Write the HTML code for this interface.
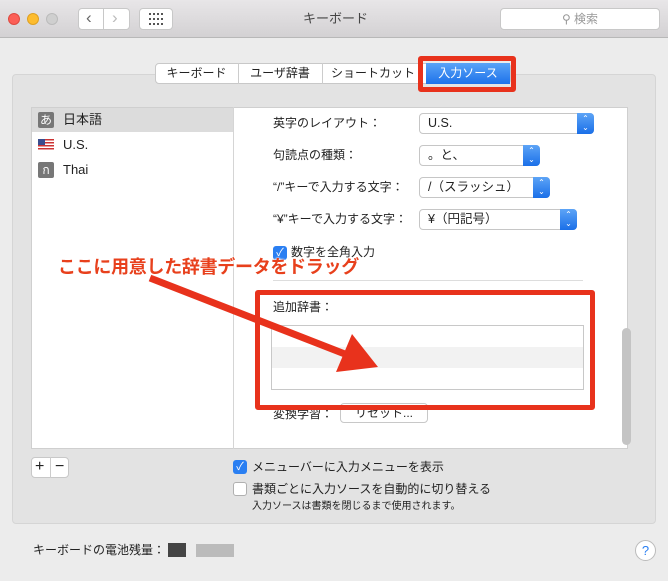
<!DOCTYPE html>
<html><head><meta charset="utf-8"><style>
*{box-sizing:border-box;margin:0;padding:0}
body{width:668px;height:581px;background:#ececec;font-family:"Liberation Sans","Noto Sans CJK JP",sans-serif;font-size:12px;line-height:1.2;color:#222;position:relative;overflow:hidden}
.a{position:absolute}
.tb{left:0;top:0;width:668px;height:38px;background:linear-gradient(#e8e6e8,#d3d1d3);border-bottom:1px solid #b8b8b8}
.dot{width:12px;height:12px;border-radius:50%;top:13px}
.btn{background:#fff;border:1px solid #c8c8c8;border-radius:4px}
.pop{height:21px;background:#fff;border:1px solid #c6c6c6;border-radius:4px;font-size:12.5px;padding:2px 0 0 8px}
.pop i{position:absolute;right:-1px;top:-1px;width:17px;height:21px;background:linear-gradient(#5da4f6,#1a6fe8);border-radius:0 4px 4px 0;color:#fff;font-style:normal;font-size:8px;text-align:center;line-height:9px;padding-top:1px}
.lbl{font-size:12px;left:273px}
.cb{width:14px;height:14px;border-radius:3px}
.on{background:#2a7ff2;color:#fff;font-size:11px;line-height:14px;text-align:center}
.off{background:#fff;border:1px solid #b0b0b0}
</style></head><body>
<div class="a tb"></div>
<div class="a dot" style="left:8px;background:#fc5f57;border:1px solid #de4a41"></div>
<div class="a dot" style="left:27px;background:#fdbc2e;border:1px solid #dea123"></div>
<div class="a dot" style="left:46px;background:#cfcfcf;border:1px solid #bbb"></div>
<div class="a btn" style="left:78px;top:8px;width:52px;height:22px"></div>
<div class="a" style="left:103px;top:8px;width:1px;height:22px;background:#c8c8c8"></div>
<div class="a" style="left:86px;top:8px;font-size:17px;color:#666">&#8249;</div>
<div class="a" style="left:112px;top:8px;font-size:17px;color:#bbb">&#8250;</div>
<div class="a btn" style="left:139px;top:8px;width:34px;height:22px"></div>
<svg class="a" style="left:149px;top:13px" width="14" height="12" fill="#555"><g><rect x="0" y="0" width="2" height="2"/><rect x="4" y="0" width="2" height="2"/><rect x="8" y="0" width="2" height="2"/><rect x="12" y="0" width="2" height="2"/><rect x="0" y="5" width="2" height="2"/><rect x="4" y="5" width="2" height="2"/><rect x="8" y="5" width="2" height="2"/><rect x="12" y="5" width="2" height="2"/><rect x="0" y="10" width="2" height="2"/><rect x="4" y="10" width="2" height="2"/><rect x="8" y="10" width="2" height="2"/><rect x="12" y="10" width="2" height="2"/></g></svg>
<div class="a" style="left:303px;top:11px;font-size:13px;color:#444">キーボード</div>
<div class="a btn" style="left:500px;top:8px;width:160px;height:22px;color:#999;font-size:12px;text-align:center;line-height:20px">&#9906; 検索</div>

<div class="a" style="left:12px;top:74px;width:644px;height:450px;background:#e3e3e3;border:1px solid #d5d5d5;border-radius:4px"></div>
<div class="a btn" style="left:155px;top:63px;width:356px;height:21px;border-radius:4px"></div>
<div class="a" style="left:155px;top:66px;width:83px;text-align:center;font-size:12px">キーボード</div>
<div class="a" style="left:238px;top:63px;width:1px;height:21px;background:#ccc"></div>
<div class="a" style="left:238px;top:66px;width:84px;text-align:center;font-size:12px">ユーザ辞書</div>
<div class="a" style="left:322px;top:63px;width:1px;height:21px;background:#ccc"></div>
<div class="a" style="left:322px;top:66px;width:102px;text-align:center;font-size:12px">ショートカット</div>
<div class="a" style="left:426px;top:63px;width:84px;height:21px;background:linear-gradient(#5aa3f7,#1d72ea);color:#fff;text-align:center;font-size:12px;line-height:21px">入力ソース</div>
<div class="a" style="left:418px;top:56px;width:98px;height:36px;border:5px solid #e8321c;border-radius:3px"></div>

<div class="a" style="left:31px;top:107px;width:597px;height:342px;background:#fff;border:1px solid #cfcfcf"></div>
<div class="a" style="left:233px;top:107px;width:1px;height:342px;background:#d5d5d5"></div>
<div class="a" style="left:32px;top:108px;width:201px;height:24px;background:#dcdcdc"></div>
<div class="a" style="left:38px;top:112px;width:16px;height:16px;background:#777;color:#fff;border-radius:2px;font-size:12px;text-align:center;line-height:16px">あ</div>
<div class="a" style="left:63px;top:112px;font-size:13px">日本語</div>
<div class="a" style="left:38px;top:139px;width:16px;height:11px;background:repeating-linear-gradient(#c33 0 1.5px,#fff 1.5px 3px)"><div style="width:7px;height:6px;background:#3a4d8f"></div></div>
<div class="a" style="left:63px;top:137px;font-size:13px">U.S.</div>
<div class="a" style="left:38px;top:162px;width:16px;height:16px;background:#777;color:#fff;border-radius:2px;font-size:12px;text-align:center;line-height:16px">ก</div>
<div class="a" style="left:63px;top:162px;font-size:13px">Thai</div>

<div class="a lbl" style="top:116px">英字のレイアウト：</div>
<div class="a pop" style="left:419px;top:113px;width:175px">U.S.<i>&#8963;<br>&#8964;</i></div>
<div class="a lbl" style="top:148px">句読点の種類：</div>
<div class="a pop" style="left:419px;top:145px;width:121px">。と、<i>&#8963;<br>&#8964;</i></div>
<div class="a lbl" style="top:180px">“/”キーで入力する文字：</div>
<div class="a pop" style="left:419px;top:177px;width:131px">/（スラッシュ）<i>&#8963;<br>&#8964;</i></div>
<div class="a lbl" style="top:212px">“¥”キーで入力する文字：</div>
<div class="a pop" style="left:419px;top:209px;width:158px">¥（円記号）<i>&#8963;<br>&#8964;</i></div>
<div class="a cb on" style="left:273px;top:246px">✓</div>
<div class="a" style="left:291px;top:245px;font-size:12px">数字を全角入力</div>
<div class="a" style="left:273px;top:280px;width:310px;height:1px;background:#ddd"></div>
<div class="a" style="left:273px;top:300px;font-size:12px">追加辞書：</div>
<div class="a" style="left:271px;top:325px;width:313px;height:65px;border:1px solid #c8c8c8;background:#fff"></div>
<div class="a" style="left:272px;top:347px;width:311px;height:21px;background:#f2f2f2"></div>
<div class="a" style="left:273px;top:407px;font-size:12px">変換学習：</div>
<div class="a btn" style="left:340px;top:403px;width:88px;height:20px;font-size:12px;text-align:center;line-height:18px">リセット...</div>
<div class="a" style="left:622px;top:328px;width:9px;height:117px;background:#c4c4c4;border-radius:5px"></div>
<div class="a" style="left:255px;top:290px;width:340px;height:120px;border:5px solid #e8321c;border-radius:3px"></div>

<svg class="a" style="left:0;top:0" width="668" height="581"><line x1="150" y1="278" x2="350" y2="356" stroke="#e8321c" stroke-width="7"/><polygon points="378,367 336,372 352,334" fill="#e8321c"/></svg>
<div class="a" style="left:58px;top:257px;font-size:18px;font-weight:bold;color:#e8401c;text-shadow:0 0 2px #fff,0 0 2px #fff,1px 1px 2px #fff;letter-spacing:-0.3px">ここに用意した辞書データをドラッグ</div>

<div class="a btn" style="left:31px;top:457px;width:38px;height:21px"></div>
<div class="a" style="left:50px;top:457px;width:1px;height:21px;background:#ccc"></div>
<div class="a" style="left:35px;top:457px;font-size:16px">+</div>
<div class="a" style="left:55px;top:457px;font-size:16px">−</div>
<div class="a cb on" style="left:233px;top:460px">✓</div>
<div class="a" style="left:252px;top:460px;font-size:12px">メニューバーに入力メニューを表示</div>
<div class="a cb off" style="left:233px;top:482px"></div>
<div class="a" style="left:252px;top:482px;font-size:12px">書類ごとに入力ソースを自動的に切り替える</div>
<div class="a" style="left:252px;top:501px;font-size:10px">入力ソースは書類を閉じるまで使用されます。</div>
<div class="a" style="left:33px;top:543px;font-size:12px">キーボードの電池残量：</div>
<div class="a" style="left:168px;top:543px;width:18px;height:14px;background:#444"></div>
<div class="a" style="left:196px;top:544px;width:38px;height:13px;background:#bbb"></div>
<div class="a" style="left:635px;top:540px;width:21px;height:21px;border-radius:50%;background:#fff;border:1px solid #bbb;color:#2a7ff2;text-align:center;font-size:13px;line-height:19px">?</div>
</body></html>
